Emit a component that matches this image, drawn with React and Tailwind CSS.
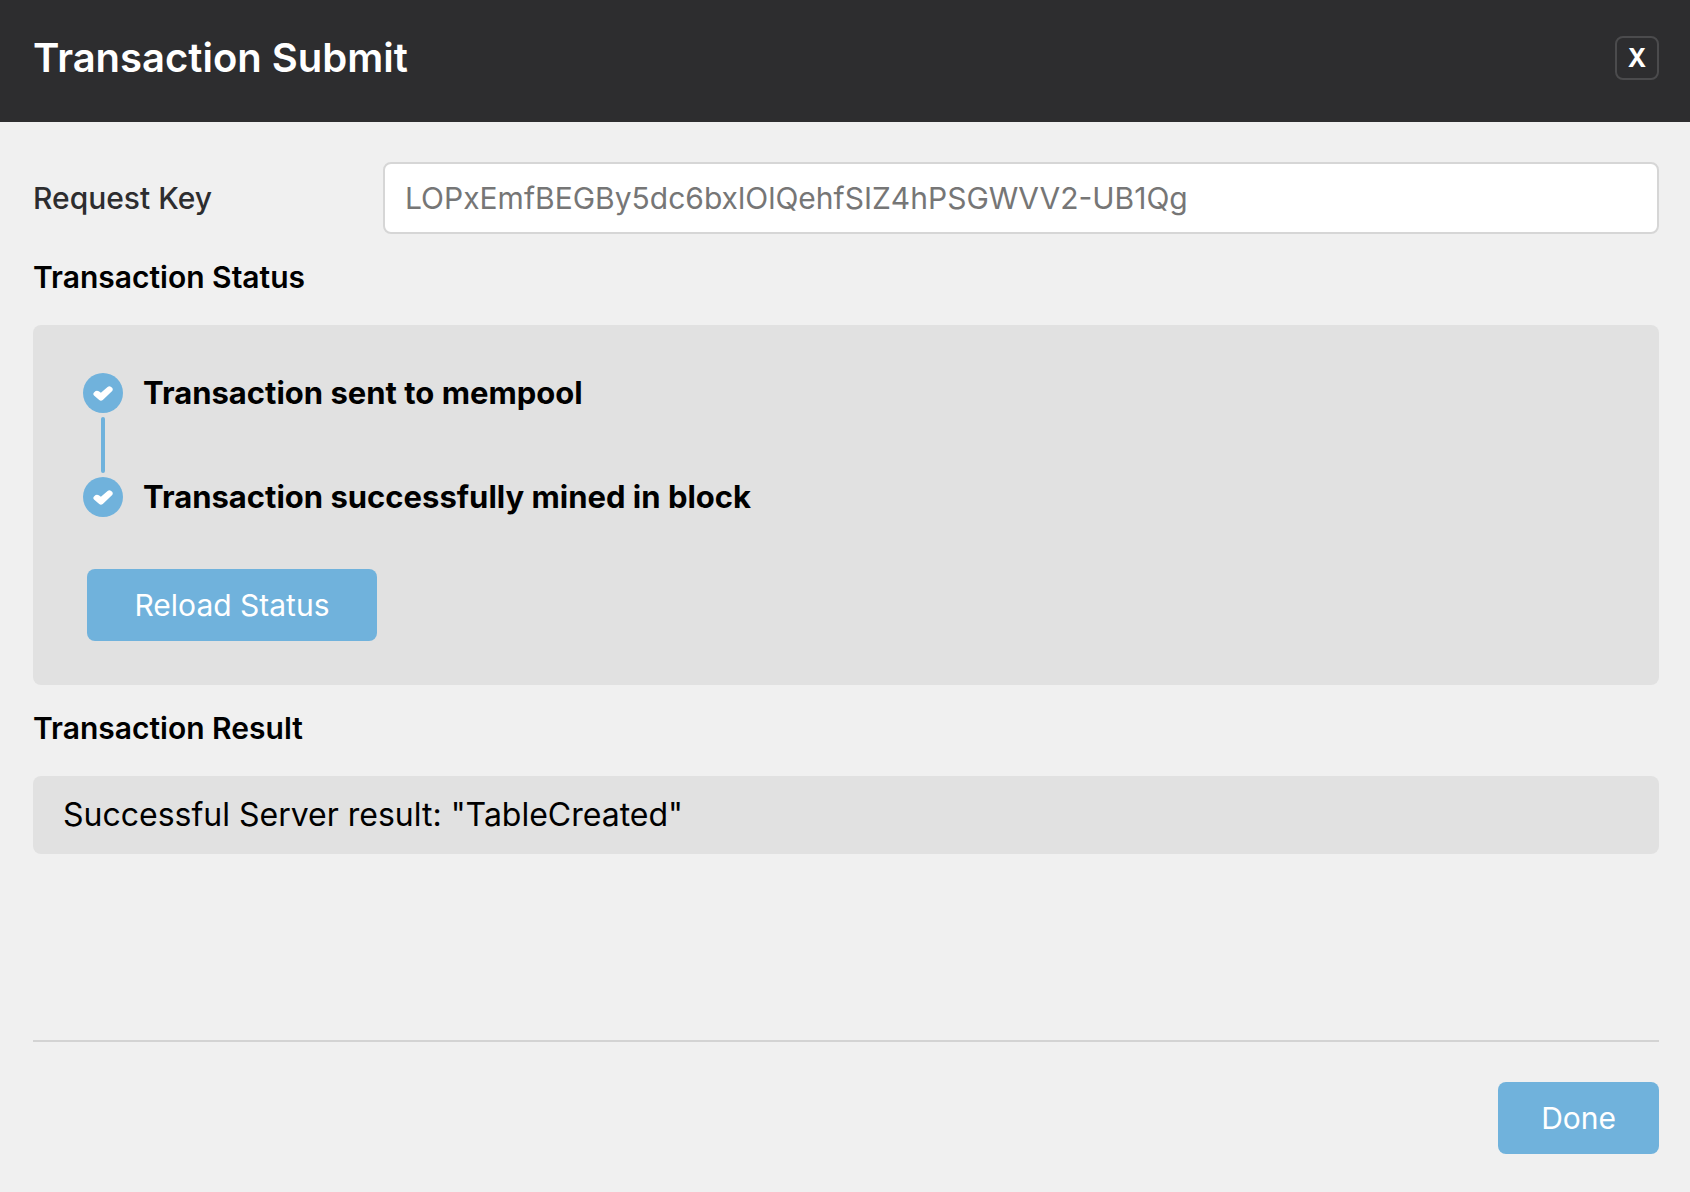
const steps = ["Transaction sent to mempool", "Transaction successfully mined in block"];

function CheckBadge() {
  return (
    <span className="flex size-10 items-center justify-center rounded-full bg-[#70b2dc]">
      <svg width="20" height="15" viewBox="0 0 20 15" fill="none" aria-hidden="true">
        <path
          d="M1 6.4 L2.6 5 Q4.2 4.2 5.8 5.2 L7.9 6.7 L14.6 0.9 Q16.2 -0.1 17.8 0.7 L19.1 1.8 Q20.4 3.3 19.2 4.9 L9.8 13.9 Q8 15.3 6.2 14 L1 9.6 Q-0.4 8 1 6.4 Z"
          fill="#fff"
        />
      </svg>
    </span>
  );
}

function ActionButton({ className = "", children }) {
  return (
    <button
      type="button"
      className={"h-18 rounded-lg bg-[#70b2dc] px-[43px] text-[30px] text-white " + className}
    >
      {children}
    </button>
  );
}

export default function App() {
  return (
    <div className="flex min-h-screen flex-col bg-[#f0f0f0] font-['Inter',sans-serif] text-black">
      <header className="flex items-center justify-between bg-[#2d2d2f] pt-9 pr-[31px] pb-[42px] pl-[33px] text-white">
        <h1 className="text-[40px] leading-11 font-semibold">Transaction Submit</h1>
        <button
          type="button"
          aria-label="Close"
          className="flex size-11 items-center justify-center rounded-lg border-2 border-[#4b4b4d] pt-0.5 text-[25px] font-bold"
        >
          X
        </button>
      </header>

      <main className="flex flex-1 flex-col pt-10 pr-[31px] pb-[38px] pl-[33px]">
        <div className="flex items-center">
          <label htmlFor="request-key" className="w-[350px] shrink-0 text-[30px] font-medium text-[#2d2d2f]">
            Request Key
          </label>
          <input
            id="request-key"
            type="text"
            readOnly
            placeholder="LOPxEmfBEGBy5dc6bxlOlQehfSIZ4hPSGWVV2-UB1Qg"
            className="h-18 min-w-0 flex-1 rounded-lg border-2 border-[#d6d6d6] bg-white px-5 text-[30px] placeholder:text-[#767676]"
          />
        </div>

        <h2 className="mt-[23px] text-[30px] leading-10 font-semibold">Transaction Status</h2>
        <section className="mt-7 rounded-lg bg-[#e1e1e1] pt-12 pr-12 pb-11 pl-[50px]">
          <ol>
            {steps.map((step, index) => (
              <li key={step}>
                {index > 0 && <div className="my-1 ml-[18px] h-14 w-1 rounded-full bg-[#70b2dc]" />}
                <div className="flex items-center gap-5">
                  <CheckBadge />
                  <span className="text-[31px] leading-10 font-bold">{step}</span>
                </div>
              </li>
            ))}
          </ol>
          <div className="mt-[52px] ml-1">
            <ActionButton className="min-w-[290px]">Reload Status</ActionButton>
          </div>
        </section>

        <h2 className="mt-[23px] text-[30px] leading-10 font-semibold">Transaction Result</h2>
        <section className="mt-7 rounded-lg bg-[#e1e1e1] px-[30px] py-[19px] text-[32px] leading-10">
          Successful Server result: "TableCreated"
        </section>

        <footer className="mt-auto flex justify-end border-t-2 border-[#d3d3d3] pt-10">
          <ActionButton>Done</ActionButton>
        </footer>
      </main>
    </div>
  );
}
